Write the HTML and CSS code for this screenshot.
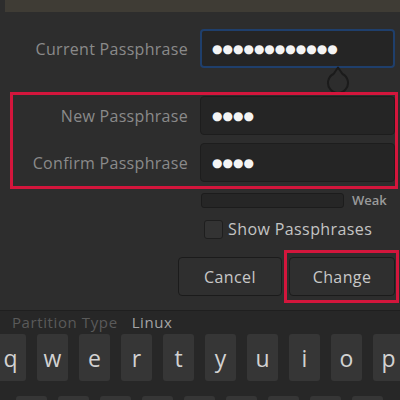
FILE: index.html
```html
<!DOCTYPE html>
<html>
<head>
<meta charset="utf-8">
<link rel="stylesheet" href="styles.css">
</head>
<body>
<div class="topbar"></div>
<div class="dialog">
  <div class="row current">
    <span class="lbl">Current Passphrase</span>
    <div class="field focused">
      <span class="dots">●●●●●●●●●●●●</span>
      <svg class="handle" width="28" height="26" viewBox="0 0 28 26"><path d="M14 1.5 L18.5 8 A10 10 0 1 1 9.5 8 Z" fill="none" stroke="#1b1b1b" stroke-width="2" stroke-linejoin="round"/></svg>
    </div>
  </div>
  <div class="highlight">
    <div class="row">
      <span class="lbl">New Passphrase</span>
      <div class="field"><span class="dots">●●●●</span></div>
    </div>
    <div class="row">
      <span class="lbl">Confirm Passphrase</span>
      <div class="field"><span class="dots">●●●●</span></div>
    </div>
  </div>
  <div class="strength"><div class="bar"></div><span class="weak">Weak</span></div>
  <div class="check"><span class="box"></span><span class="check-text">Show Passphrases</span></div>
  <div class="buttons">
    <button class="btn cancel">Cancel</button>
    <div class="hl-btn"><button class="btn change">Change</button></div>
  </div>
</div>
<div class="keyboard">
  <div class="partition"><span class="pk">Partition Type</span><span class="pv">Linux</span></div>
  <div class="keys row1">
    <span class="key">q</span><span class="key">w</span><span class="key">e</span><span class="key">r</span><span class="key">t</span><span class="key">y</span><span class="key">u</span><span class="key">i</span><span class="key">o</span><span class="key">p</span>
  </div>
  <div class="keys row2">
    <span class="key"></span><span class="key"></span><span class="key"></span><span class="key"></span><span class="key"></span><span class="key"></span><span class="key"></span><span class="key"></span><span class="key"></span>
  </div>
</div>
</body>
</html>
```
FILE: styles.css
```css
* { box-sizing: border-box; }
html, body { margin: 0; padding: 0; }
body {
  width: 400px;
  height: 400px;
  overflow: hidden;
  background: #2d2d2d;
  font-family: "Open Sans", "Noto Sans", sans-serif;
}
.topbar {
  height: 12px;
  margin-left: 5px;
  background: #3f3c35;
}
.dialog {
  height: 299px;
  padding-top: 17px;
  background: #2d2d2d;
  border-bottom: 1px solid #1f1f1f;
}
.row {
  display: grid;
  grid-template-columns: 188px 195px;
  column-gap: 12px;
  align-items: center;
}
.lbl {
  text-align: right;
  color: #8a8a8a;
  font-size: 16px;
  letter-spacing: 0.3px;
}
.field {
  position: relative;
  height: 39px;
  background: #252525;
  border: 1px solid #1d1d1d;
  border-radius: 4px;
  display: flex;
  align-items: center;
  padding-left: 11px;
}
.field.focused {
  border: 2px solid #1f3f6c;
  padding-left: 10px;
}
.dots {
  font-family: "DejaVu Sans", sans-serif;
  font-size: 12px;
  color: #f4f4f4;
  letter-spacing: 0;
}
.handle {
  position: absolute;
  left: 122px;
  top: 35px;
}
.highlight {
  margin: 24px 2px 0 10px;
  border: 3px solid #d3163c;
  padding: 1px 0 4px 0;
  display: flex;
  flex-direction: column;
  gap: 8px;
}
.highlight .row {
  grid-template-columns: 175px 195px;
}
.strength {
  display: flex;
  align-items: center;
  margin: 2px 0 0 201px;
}
.bar {
  width: 143px;
  height: 15px;
  background: #262626;
  border: 1px solid #1c1c1c;
  border-radius: 3px;
}
.weak {
  margin-left: 8px;
  font-size: 13px;
  font-weight: 600;
  color: #9a9a9a;
}
.check {
  display: flex;
  align-items: center;
  margin: 9px 0 0 204px;
}
.box {
  width: 19px;
  height: 19px;
  background: #333333;
  border: 1px solid #1e1e1e;
  border-radius: 3px;
}
.check-text {
  margin-left: 5px;
  font-size: 16px;
  letter-spacing: 0.4px;
  color: #c4c4c4;
}
.buttons {
  display: flex;
  justify-content: flex-end;
  align-items: center;
  gap: 2px;
  margin: 10px 1px 0 0;
}
.btn {
  height: 39px;
  background: #2f2f2f;
  border: 1px solid #1b1b1b;
  border-radius: 4px;
  color: #c8c8c8;
  font-family: "Open Sans", "Noto Sans", sans-serif;
  font-size: 16px;
  letter-spacing: 0.4px;
  padding: 0;
}
.cancel { width: 104px; }
.hl-btn {
  border: 3px solid #d3163c;
  padding: 4px 1px 4px 2px;
}
.change { width: 106px; height: 39px; }
.keyboard {
  background: #272727;
  height: 90px;
}
.partition {
  padding: 2px 0 0 12px;
  font-size: 15px;
  letter-spacing: 0.6px;
  line-height: 18px;
}
.pk { color: #5a5a5a; }
.pv { color: #a4a4a4; margin-left: 14px; }
.keys {
  display: flex;
  gap: 11px;
}
.row1 { margin: 3px 0 0 -5px; }
.row2 { margin: 15px 0 0 16px; }
.key {
  flex: 0 0 31px;
  height: 47px;
  background: #363636;
  border-radius: 3px;
  color: #d2d2d2;
  font-size: 23px;
  display: flex;
  align-items: center;
  justify-content: center;
}
```
